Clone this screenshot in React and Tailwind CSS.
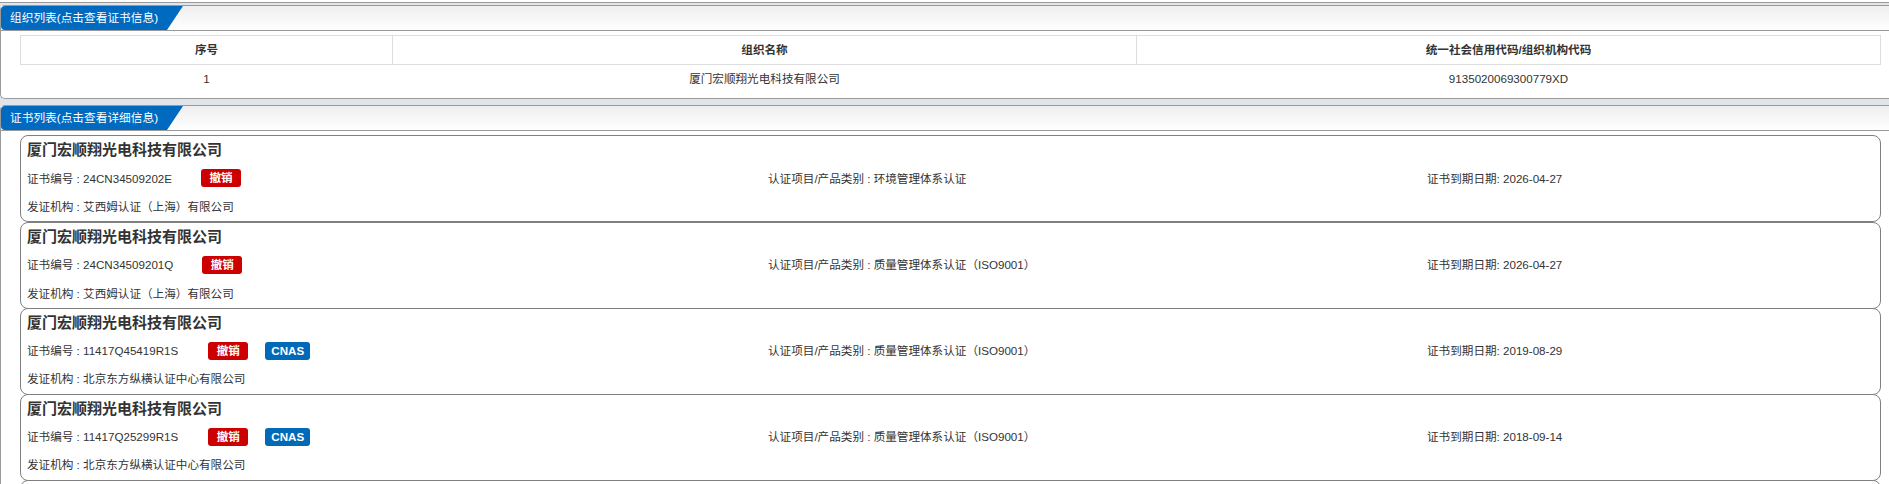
const font = { fontFamily: '"Liberation Sans", "Noto Sans CJK SC", sans-serif' };

const certs = [
  { no: "24CN34509202E", type: "环境管理体系认证", date: "2026-04-27", org: "艾西姆认证（上海）有限公司", low: true },
  { no: "24CN34509201Q", type: "质量管理体系认证（ISO9001）", date: "2026-04-27", org: "艾西姆认证（上海）有限公司" },
  { no: "11417Q45419R1S", type: "质量管理体系认证（ISO9001）", date: "2019-08-29", org: "北京东方纵横认证中心有限公司", cnas: true },
  { no: "11417Q25299R1S", type: "质量管理体系认证（ISO9001）", date: "2018-09-14", org: "北京东方纵横认证中心有限公司", cnas: true },
];

function Header({ title }) {
  return (
    <div className="relative h-[25px] border-b border-[#999999] bg-gradient-to-b from-[#eeeeee] to-white">
      <div className="flex h-[24px] w-[182px] items-center rounded-tl-[4px] rounded-bl-[4px] bg-[#0069c0] pl-[9px] text-[11.7px] font-normal text-white [clip-path:polygon(0_0,100%_0,166px_100%,0_100%)]">
        {title}
      </div>
    </div>
  );
}

function Card({ c }) {
  const textPad = c.low ? "pt-[2px]" : "";
  return (
    <div className="h-[87px] rounded-[8px] border border-[#808080] bg-white pl-[6px] text-[11.6px] text-[#333333]">
      <div className="pt-[4px] text-[15px] leading-[20px] font-bold text-[#333333]">厦门宏顺翔光电科技有限公司</div>
      <div className="mt-[4px] grid h-[28px] grid-cols-[741px_659px_1fr] items-center">
        <div className="flex items-center">
          <span className={textPad}>证书编号 : {c.no}</span>
          {c.cnas ? (
            <>
              <span className="mb-[1px] ml-[30px] flex h-[18px] w-[40px] items-center justify-center rounded-[3px] bg-[#cc0000] font-bold text-white">撤销</span>
              <span className="ml-[17px] flex h-[18px] w-[45px] items-center justify-center rounded-[3px] bg-[#0069b8] font-bold text-white">CNAS</span>
            </>
          ) : (
            <span className="ml-[29px] flex h-[18px] w-[40px] items-center justify-center rounded-[3px] bg-[#cc0000] font-bold text-white">撤销</span>
          )}
        </div>
        <div className={textPad}>认证项目/产品类别 : {c.type}</div>
        <div className={textPad}>证书到期日期: {c.date}</div>
      </div>
      <div className={`${c.cnas ? "mt-[4px]" : "mt-[5px]"} leading-[20px]`}>发证机构 : {c.org}</div>
    </div>
  );
}

export default function App() {
  return (
    <div style={font} className="h-[484px] w-[1889px] overflow-hidden bg-[#e1e5e9] text-[11.6px] text-[#333333]">
      <div className="h-[3px] border-b border-[#999999] bg-white" />
      <div className="mt-[2px] h-[94px] rounded-l-[5px] border-y border-l border-[#999999] bg-white">
        <Header title="组织列表(点击查看证书信息)" />
        <div className="pt-[4px] pr-[8px] pl-[19px]">
          <table className="w-full table-fixed border-collapse">
            <colgroup>
              <col className="w-[20%]" />
              <col className="w-[40%]" />
              <col className="w-[40%]" />
            </colgroup>
            <thead>
              <tr className="h-[29px]">
                <th className="border border-[#dddddd] pb-[1px] font-bold">序号</th>
                <th className="border border-[#dddddd] pb-[1px] font-bold">组织名称</th>
                <th className="border border-[#dddddd] pb-[1px] font-bold">统一社会信用代码/组织机构代码</th>
              </tr>
            </thead>
            <tbody>
              <tr className="h-[28px] text-center">
                <td>1</td>
                <td>厦门宏顺翔光电科技有限公司</td>
                <td>9135020069300779XD</td>
              </tr>
            </tbody>
          </table>
        </div>
      </div>
      <div className="mt-[6px] rounded-tl-[5px] border-t border-l border-[#999999] bg-white pb-[20px]">
        <Header title="证书列表(点击查看详细信息)" />
        <div className="pt-[4px] pr-[8px] pl-[19px]">
          {certs.map((c, i) => (
            <div key={i} className={i === 0 ? "" : "-mb-px"}>
              <Card c={c} />
            </div>
          ))}
          <div className="h-[87px] rounded-[8px] border border-[#808080] bg-white" />
        </div>
      </div>
    </div>
  );
}
